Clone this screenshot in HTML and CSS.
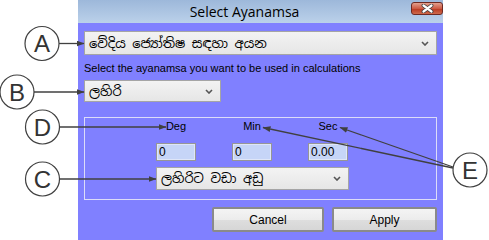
FILE: index.html
```html
<!DOCTYPE html>
<html lang="si">

<head>
  <meta charset="utf-8">
  <title>Select Ayanamsa</title>
  <link rel="stylesheet" href="styles.css">
</head>

<body>
  <div class="screen">
    <div class="dialog">
      <!-- title bar -->
      <div class="titlebar">
        <span class="title">Select Ayanamsa</span>
        <span class="close">
          <svg width="13" height="9" viewBox="0 0 13 9">
            <path d="M2.5 1.5 L10.5 7.5 M10.5 1.5 L2.5 7.5" stroke="#3a3a3a" stroke-width="3.8" stroke-linecap="round"/>
            <path d="M2.5 1.5 L10.5 7.5 M10.5 1.5 L2.5 7.5" stroke="#fff" stroke-width="2.2" stroke-linecap="round"/>
          </svg>
        </span>
      </div>

      <div class="content">
        <div class="combo combo-wide">
          <span class="combo-text">වේදිය ජ්‍යෝතිෂ සඳහා අයන</span>
          <svg class="chevron" width="8" height="5" viewBox="0 0 8 5"><path d="M1 1 L4 4 L7 1" fill="none" stroke="#555" stroke-width="1.6"/></svg>
        </div>

        <p class="hint">Select the ayanamsa you want to be used in calculations</p>

        <div class="combo combo-short">
          <span class="combo-text">ලහිරි</span>
          <svg class="chevron" width="8" height="5" viewBox="0 0 8 5"><path d="M1 1 L4 4 L7 1" fill="none" stroke="#555" stroke-width="1.6"/></svg>
        </div>

        <!-- correction group -->
        <div class="group">
          <div class="fields">
            <div class="field">
              <span class="field-label">Deg</span>
              <input class="field-input" type="text" value="0">
            </div>
            <div class="field">
              <span class="field-label">Min</span>
              <input class="field-input" type="text" value="0">
            </div>
            <div class="field">
              <span class="field-label">Sec</span>
              <input class="field-input" type="text" value="0.00">
            </div>
          </div>
          <div class="combo combo-mid">
            <span class="combo-text">ලහිරිට වඩා අඩු</span>
            <svg class="chevron" width="8" height="5" viewBox="0 0 8 5"><path d="M1 1 L4 4 L7 1" fill="none" stroke="#555" stroke-width="1.6"/></svg>
          </div>
        </div>

        <div class="actions">
          <button class="btn btn-cancel">Cancel</button>
          <button class="btn btn-apply">Apply</button>
        </div>
      </div>
    </div>

    <!-- callout labels -->
    <svg class="callouts" width="489" height="240" viewBox="0 0 489 240">
      <defs>
        <marker id="head" markerWidth="8" markerHeight="6" refX="7.5" refY="3" orient="auto" markerUnits="userSpaceOnUse">
          <path d="M0 0 L8 3 L0 6 Z" fill="#404040"/>
        </marker>
      </defs>
      <g stroke="#404040" stroke-width="1.3" fill="none">
        <line x1="59" y1="43.5" x2="84" y2="43.5" marker-end="url(#head)"/>
        <line x1="34" y1="92" x2="84" y2="92" marker-end="url(#head)"/>
        <line x1="59" y1="127" x2="166" y2="127" marker-end="url(#head)"/>
        <line x1="59" y1="179" x2="156" y2="179" marker-end="url(#head)"/>
        <line x1="453" y1="168" x2="263" y2="127.5" marker-end="url(#head)"/>
        <line x1="453" y1="167" x2="340" y2="127.5" marker-end="url(#head)"/>
      </g>
      <g stroke="#404040" stroke-width="1.2" fill="#fff">
        <circle cx="42" cy="43.5" r="17"/>
        <circle cx="17" cy="92" r="17"/>
        <circle cx="42.5" cy="127" r="17"/>
        <circle cx="42.5" cy="179" r="17"/>
        <circle cx="470" cy="170" r="17"/>
      </g>
      <g class="callout-text" text-anchor="middle">
        <text x="42" y="52">A</text>
        <text x="17" y="100.5">B</text>
        <text x="42.5" y="135.5">D</text>
        <text x="42.5" y="187.5">C</text>
        <text x="470" y="178.5">E</text>
      </g>
    </svg>
  </div>
</body>

</html>
```

FILE: styles.css
```css
body {
  margin: 0;
  background-color: #fff;
  font-family: "Liberation Sans", Arial, sans-serif;
  font-size: 11px;
  color: #000;
}

.screen {
  position: relative;
  width: 489px;
  height: 240px;
  overflow: hidden;
}

.dialog {
  margin-left: 78px;
  width: 365px;
  height: 240px;
  background-color: #8080ff;
}

.titlebar {
  display: flex;
  align-items: flex-start;
  height: 23px;
  background: linear-gradient(#9db8da, #bbd1ea);
}

.title {
  flex: 1;
  text-align: center;
  font-family: "Open Sans", "Noto Sans", sans-serif;
  font-size: 14px;
  line-height: 23px;
  color: #000;
}

.close {
  display: flex;
  align-items: center;
  justify-content: center;
  width: 30px;
  height: 11px;
  margin-top: 2px;
  border: 1px solid #6e2a22;
  border-radius: 3px;
  background: linear-gradient(#e3a08e, #cc5a43 50%, #b8361f 51%, #cf6a4c);
}

.content {
  padding: 8px 6px 0 6px;
}

.combo {
  display: flex;
  align-items: center;
  justify-content: space-between;
  box-sizing: border-box;
  padding: 0 7px 0 4px;
  border: 1px solid #a5a5a5;
  background: linear-gradient(#f3f3f3, #e6e6e6);
}

.combo-text {
  font-family: "Noto Sans Sinhala", "Iskoola Pota", "Lohit Sinhala", sans-serif;
  font-size: 13px;
  white-space: nowrap;
}

.combo-wide {
  height: 24px;
}

.combo-short {
  width: 137px;
  height: 22px;
  margin-top: 5px;
}

.combo-mid {
  width: 193px;
  height: 23px;
  margin-top: 6px;
}

.hint {
  margin: 7px 0 0 0;
  line-height: 13px;
}

.group {
  margin-top: 15px;
  padding: 2px 0 9px 71px;
  border: 1px solid #dcdcf8;
}

.fields {
  display: grid;
  grid-template-columns: 40px 40px 40px;
  column-gap: 36px;
}

.field {
  display: flex;
  flex-direction: column;
  align-items: center;
}

.field-label {
  line-height: 13px;
}

.field-input {
  box-sizing: border-box;
  width: 40px;
  height: 18px;
  margin: 10px 0 0 0;
  padding: 0 2px;
  border: 1px solid #969696;
  box-shadow: inset 0 0 0 1px #dfe6f8;
  background-color: #c6d5f7;
  font-family: "Liberation Sans", Arial, sans-serif;
  font-size: 12px;
  color: #000;
  outline: none;
}

.actions {
  display: flex;
  justify-content: flex-end;
  gap: 8px;
  margin-top: 7px;
}

.btn {
  box-sizing: border-box;
  height: 25px;
  padding: 0;
  border: 2px solid #8a8a8a;
  border-radius: 2px;
  background: linear-gradient(#f4f4f4, #ececec 50%, #dedede 51%, #d6d6d6);
  font-family: "Liberation Sans", Arial, sans-serif;
  font-size: 12px;
  color: #000;
}

.btn-cancel {
  width: 112px;
}

.btn-apply {
  width: 105px;
}

.callouts {
  position: absolute;
  top: 0;
  left: 0;
  pointer-events: none;
}

.callout-text {
  font-family: "Liberation Sans", Arial, sans-serif;
  font-size: 24px;
  fill: #333;
}
```
